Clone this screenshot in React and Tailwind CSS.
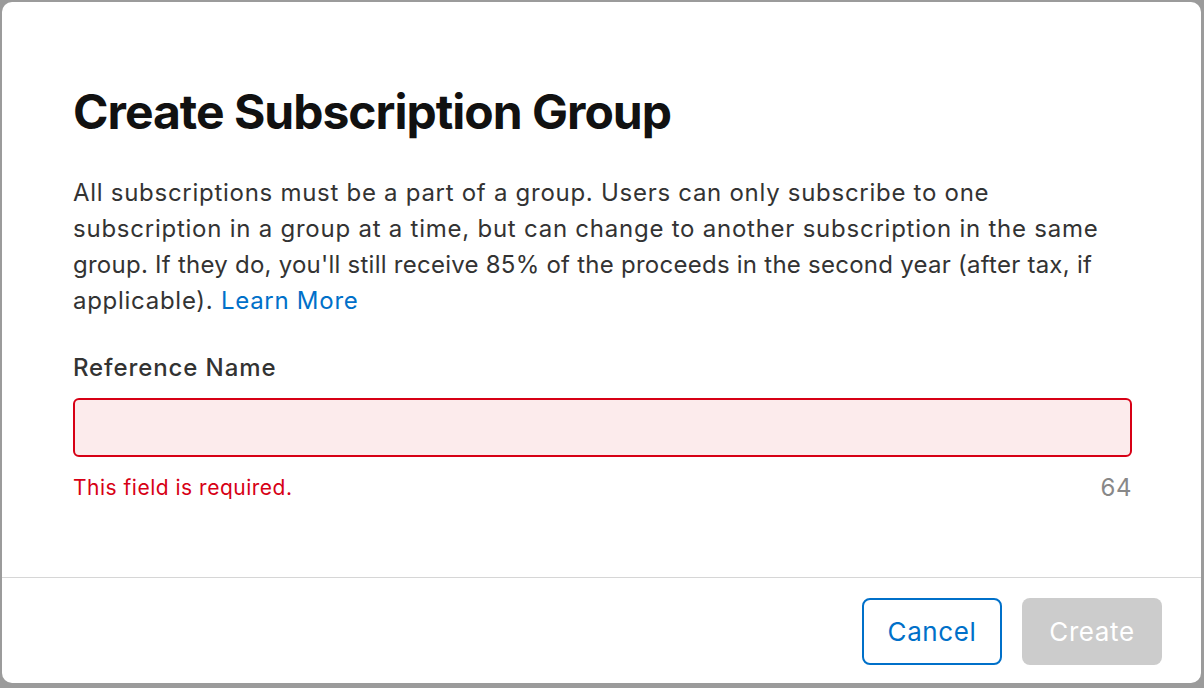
import React from "react";

export default function App() {
  const font = { fontFamily: "Inter, 'Noto Sans', sans-serif" };
  return (
    <div className="relative w-[1204px] h-[688px] overflow-hidden bg-[#9b9b9b]" style={font}>
      {/* underlying page (dimmed) */}
      <div className="flex flex-col h-full">
        <div className="flex-1" />
        <div className="pl-[17px] h-[8px] text-[24px] leading-[36px] text-[#2a2a2a] whitespace-nowrap tracking-[0.4px]">
          subscribers retain access to your apple paid content even after their subscription expires due to a
        </div>
      </div>

      {/* modal */}
      <div className="absolute left-[2px] top-[2px] w-[1199px] h-[681px] bg-white rounded-[10px] flex flex-col">
        <div className="flex-1 pl-[71px] pr-[69px] pt-[81px]">
          <h1 className="text-[48px] leading-[58px] font-bold text-[#111] tracking-[-1px]">
            Create Subscription Group
          </h1>
          <p className="mt-[34px] text-[24px] leading-[36px] text-[#333] tracking-[0.72px] whitespace-nowrap">
            <span className="block">All subscriptions must be a part of a group. Users can only subscribe to one</span>
            <span className="block tracking-[0.76px]">subscription in a group at a time, but can change to another subscription in the same</span>
            <span className="block tracking-[0.25px]">group. If they do, you'll still receive 85% of the proceeds in the second year (after tax, if</span>
            <span className="block">
              applicable). <span className="text-[#0070c9]">Learn More</span>
            </span>
          </p>
          <div className="mt-[31px] text-[24px] leading-[36px] font-medium text-[#333] tracking-[0.9px]">
            Reference Name
          </div>
          <div className="mt-[12px] h-[59px] w-full rounded-[6px] border-2 border-[#d70015] bg-[#fcebec]" />
          <div className="mt-[16px] flex items-center justify-between">
            <span className="text-[21px] leading-[30px] text-[#d70015] tracking-[0.5px]">This field is required.</span>
            <span className="text-[24px] leading-[30px] text-[#888] tracking-[0.5px]">64</span>
          </div>
        </div>
        <div className="border-t border-[#d6d6d6] flex justify-end gap-[20px] pt-[20px] pb-[18px] pr-[39px]">
          <button className="w-[140px] h-[67px] rounded-[8px] border-2 border-[#0070c9] text-[#0070c9] text-[26px] tracking-[0.6px] bg-white">
            Cancel
          </button>
          <button className="w-[140px] h-[67px] rounded-[8px] bg-[#cccccc] text-white text-[26px] tracking-[0.6px]">
            Create
          </button>
        </div>
      </div>
    </div>
  );
}
